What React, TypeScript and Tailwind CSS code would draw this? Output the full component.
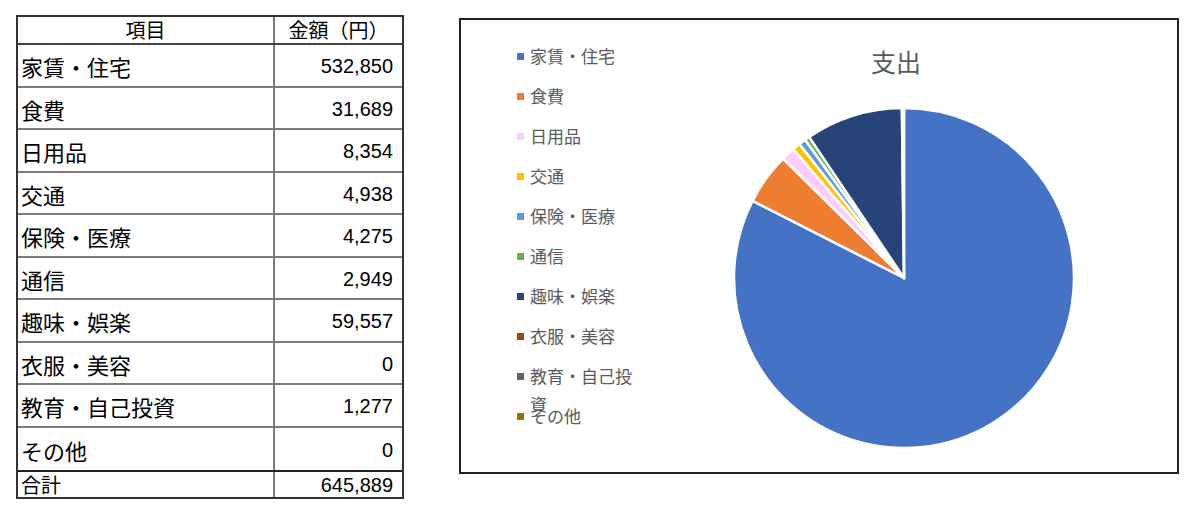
const items = [
  { name: "家賃・住宅", amount: 532850, color: "#4472C4" },
  { name: "食費", amount: 31689, color: "#ED7D31" },
  { name: "日用品", amount: 8354, color: "#FFCCFF" },
  { name: "交通", amount: 4938, color: "#FFC000" },
  { name: "保険・医療", amount: 4275, color: "#5B9BD5" },
  { name: "通信", amount: 2949, color: "#70AD47" },
  { name: "趣味・娯楽", amount: 59557, color: "#264478" },
  { name: "衣服・美容", amount: 0, color: "#9E480E" },
  { name: "教育・自己投資", amount: 1277, color: "#636363" },
  { name: "その他", amount: 0, color: "#997300" },
];

const total = items.reduce((s, i) => s + i.amount, 0);

const jp = { fontFamily: '"Noto Sans CJK JP", "Noto Sans", sans-serif' };
const num = { fontFamily: '"Liberation Sans", Arial, sans-serif' };

function Pie() {
  const cx = 172;
  const cy = 172;
  const r = 170;
  let start = 0;
  const slices = items
    .filter((i) => i.amount > 0)
    .map((i) => {
      const frac = i.amount / total;
      const a0 = start * 2 * Math.PI;
      const a1 = (start + frac) * 2 * Math.PI;
      start += frac;
      const x0 = cx + r * Math.sin(a0);
      const y0 = cy - r * Math.cos(a0);
      const x1 = cx + r * Math.sin(a1);
      const y1 = cy - r * Math.cos(a1);
      const large = frac > 0.5 ? 1 : 0;
      const d = `M ${cx} ${cy} L ${x0} ${y0} A ${r} ${r} 0 ${large} 1 ${x1} ${y1} Z`;
      return <path key={i.name} d={d} fill={i.color} stroke="#fff" strokeWidth={2.5} strokeLinejoin="round" />;
    });
  return (
    <svg width="344" height="344" viewBox="0 0 344 344">
      {slices}
    </svg>
  );
}

export default function App() {
  return (
    <div className="bg-white w-[1200px] h-[521px] flex items-start pt-[15px] pl-[16px]">
      {/* table */}
      <div className="w-[388px] border-2 border-[#333] text-black">
        <div className="flex h-[28px] border-b-2 border-[#444] text-[20px] leading-none" style={jp}>
          <div className="w-[257px] border-r-2 border-[#7a7a7a] flex items-center justify-center">項目</div>
          <div className="flex-1 flex items-center justify-center">金額（円）</div>
        </div>
        {items.map((i, idx) => (
          <div
            key={i.name}
            className={`flex h-[42.5px] ${idx < items.length - 1 ? "border-b-2 border-[#7a7a7a]" : ""}`}
          >
            <div className="w-[257px] border-r-2 border-[#7a7a7a] flex items-center pl-[3px] pt-[2px] text-[22px] leading-none" style={jp}>
              {i.name}
            </div>
            <div className="flex-1 flex items-center justify-end pr-[9px] pt-[2px] text-[20px] leading-none" style={num}>
              {i.amount.toLocaleString("en-US")}
            </div>
          </div>
        ))}
        <div className="flex h-[27px] border-t-2 border-[#222]">
          <div className="w-[257px] border-r-2 border-[#7a7a7a] flex items-center pl-[3px] text-[20px] leading-none" style={jp}>
            合計
          </div>
          <div className="flex-1 flex items-center justify-end pr-[9px] text-[20px] leading-none" style={num}>
            {total.toLocaleString("en-US")}
          </div>
        </div>
      </div>

      {/* chart */}
      <div className="ml-[55px] mt-[3px] w-[720px] h-[456px] border-2 border-[#222] flex">
        <div className="w-[258px] pl-[56px] pt-[17px] flex flex-col">
          {items.map((i) => (
            <div key={i.name} className="h-[40px] flex items-start pt-[6px]">
              <span className="w-[7px] h-[7px] mt-[10px] mr-[6px] shrink-0" style={{ backgroundColor: i.color }} />
              <span className="w-[110px] text-[17px] leading-[28px] text-[#595959] -mt-[1px]" style={jp}>
                {i.name}
              </span>
            </div>
          ))}
        </div>
        <div className="flex-1 flex flex-col">
          <div className="ml-[152px] mt-[26px] h-[30px] text-[25px] leading-[30px] text-[#595959]" style={jp}>
            支出
          </div>
          <div className="ml-[13px] mt-[30px]">
            <Pie />
          </div>
        </div>
      </div>
    </div>
  );
}
